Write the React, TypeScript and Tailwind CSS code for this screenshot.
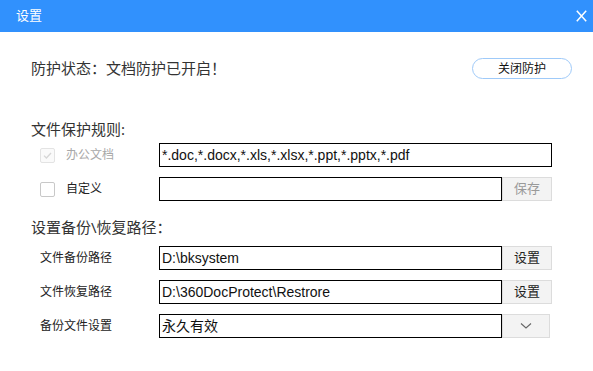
import React, { useState } from 'react';

const font = { fontFamily: '"Noto Sans", "Noto Sans CJK SC", sans-serif' };
const fieldFont = { fontFamily: '"Liberation Sans", "Noto Sans CJK SC", sans-serif' };

function Box({ checked, disabled }: { checked?: boolean; disabled?: boolean }) {
  return (
    <span
      className={`flex h-[15px] w-[15px] items-center justify-center rounded-[2px] border ${
        disabled ? 'border-[#e3e3e3] bg-[#fafafa]' : 'border-[#c8c8c8] bg-white'
      }`}
    >
      {checked && (
        <svg width="11" height="11" viewBox="0 0 11 11" fill="none">
          <path d="M2 5.6 L4.4 8 L9 3" stroke="#d6d6d6" strokeWidth="1.3" />
        </svg>
      )}
    </span>
  );
}

function SideButton({ children, muted }: { children: React.ReactNode; muted?: boolean }) {
  return (
    <button
      className={`flex h-6 w-[50px] items-center justify-center border border-[#dcdcdc] bg-[#f3f3f3] text-[13px] ${
        muted ? 'text-[#9a9a9a]' : 'text-[#222]'
      }`}
    >
      {children}
    </button>
  );
}

function Field({ children, wide }: { children?: React.ReactNode; wide?: boolean }) {
  return (
    <div
      className={`flex h-6 items-center border border-black px-[2px] text-[14px] text-[#111] ${
        wide ? 'w-[393px]' : 'w-[343px]'
      }`}
      style={fieldFont}
    >
      {children}
    </div>
  );
}

export default function App() {
  const [rules] = useState('*.doc,*.docx,*.xls,*.xlsx,*.ppt,*.pptx,*.pdf');

  return (
    <div className="h-[371px] w-[593px] bg-white text-[#333]" style={font}>
      <div className="flex h-8 items-center justify-between bg-[#3191fd] pl-4 pr-[6px] text-white">
        <span className="text-[13px]">设置</span>
        <svg width="11" height="12" viewBox="0 0 11 12">
          <path d="M0.8 0.8 L10.2 11.2 M10.2 0.8 L0.8 11.2" stroke="white" strokeWidth="1.5" />
        </svg>
      </div>

      <div className="mt-[26px] flex h-[21px] items-center justify-between pl-[31px] pr-[21px]">
        <span className="text-[15px] leading-none">防护状态：文档防护已开启！</span>
        <button className="flex h-[21px] w-[100px] items-center justify-center rounded-full border border-[#9fcaf9] text-[12px] text-[#111]">
          关闭防护
        </button>
      </div>

      <div className="mt-[40px] pl-[31px] text-[15px] leading-5">文件保护规则:</div>

      <div className="mt-[4px] flex flex-col gap-[10px] pl-10">
        <div className="flex h-6 items-center">
          <Box checked disabled />
          <span className="ml-[11px] w-[93px] text-[12px] text-[#a8a8a8]">办公文档</span>
          <Field wide>{rules}</Field>
        </div>
        <div className="flex h-6 items-center">
          <Box />
          <span className="ml-[11px] w-[93px] text-[12px] text-[#222]">自定义</span>
          <Field />
          <SideButton muted>保存</SideButton>
        </div>
      </div>

      <div className="mt-4 pl-[31px] text-[15px] leading-5">设置备份\恢复路径：</div>

      <div className="mt-[9px] flex flex-col gap-[10px] pl-10 text-[12px] text-[#222]">
        <div className="flex h-6 items-center">
          <span className="w-[119px]">文件备份路径</span>
          <Field>D:\bksystem</Field>
          <SideButton>设置</SideButton>
        </div>
        <div className="flex h-6 items-center">
          <span className="w-[119px]">文件恢复路径</span>
          <Field>D:\360DocProtect\Restrore</Field>
          <SideButton>设置</SideButton>
        </div>
        <div className="flex h-6 items-center">
          <span className="w-[119px]">备份文件设置</span>
          <Field>永久有效</Field>
          <button className="flex h-6 w-[48px] items-center justify-center border border-[#dcdcdc] bg-[#f3f3f3]">
            <svg width="12" height="8" viewBox="0 0 12 8" fill="none">
              <path d="M1 1.5 L6 6 L11 1.5" stroke="#666" strokeWidth="1.1" />
            </svg>
          </button>
        </div>
      </div>
    </div>
  );
}
